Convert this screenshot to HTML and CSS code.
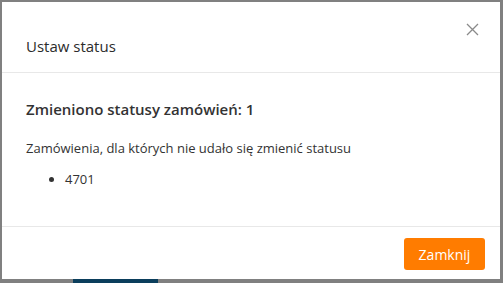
FILE: index.html
```html
<!DOCTYPE html>
<html lang="pl">
<head>
<meta charset="utf-8">
<link rel="stylesheet" href="styles.css">
</head>
<body>
<div class="modal">
  <div class="modal-header">
    <h4 class="modal-title">Ustaw status</h4>
    <button class="close" aria-label="Zamknij">
      <svg width="13" height="13" viewBox="0 0 13 13"><path d="M1 1L12 12M12 1L1 12" stroke="#8a8a8a" stroke-width="1.3" fill="none"/></svg>
    </button>
  </div>
  <div class="modal-body">
    <h3 class="result">Zmieniono statusy zamówień: 1</h3>
    <p class="info">Zamówienia, dla których nie udało się zmienić statusu</p>
    <ul class="orders">
      <li>4701</li>
    </ul>
  </div>
  <div class="modal-footer">
    <button class="btn">Zamknij</button>
  </div>
</div>
<div class="under">
  <div class="under-box"></div>
</div>
</body>
</html>
```
FILE: styles.css
```css
html, body {
  margin: 0;
  padding: 0;
  height: 283px;
  overflow: hidden;
}
body {
  background: #808080;
  font-family: "Open Sans", "Noto Sans", sans-serif;
  color: #333;
  padding-top: 2px;
  box-sizing: border-box;
}
.modal {
  margin-left: 2px;
  width: 498px;
  height: 277px;
  background: #fff;
  display: flex;
  flex-direction: column;
}
.modal-header {
  height: 71px;
  box-sizing: border-box;
  border-bottom: 1px solid #e8e8e8;
  display: flex;
  align-items: flex-start;
  justify-content: space-between;
  padding: 0 24px;
}
.modal-title {
  margin: 34px 0 0;
  font-size: 15px;
  font-weight: 400;
  line-height: 20px;
  color: #2b2b2b;
}
.close {
  margin: 21px -3px 0 0;
  padding: 0;
  border: 0;
  background: none;
  width: 13px;
  height: 13px;
  display: flex;
}
.modal-body {
  height: 154px;
  box-sizing: border-box;
  border-bottom: 1px solid #e8e8e8;
  padding: 26px 24px 0;
}
.result {
  margin: 0;
  font-size: 15px;
  font-weight: 600;
  line-height: 20px;
  color: #333;
}
.info {
  margin: 20px 0 0;
  font-size: 13px;
  line-height: 18px;
}
.orders {
  margin: 13px 0 0;
  padding-left: 39px;
  font-size: 13px;
  line-height: 18px;
}
.modal-footer {
  flex: 1;
  display: flex;
  justify-content: flex-end;
  align-items: flex-start;
  padding: 11px 15px 0;
}
.btn {
  width: 81px;
  height: 32px;
  border: 0;
  border-radius: 3px;
  background: #ff7c00;
  color: #fff;
  font-family: "Open Sans", "Noto Sans", sans-serif;
  font-size: 14px;
  font-weight: 500;
  padding: 0;
}
.under {
  display: flex;
  padding-left: 73px;
}
.under-box {
  width: 85px;
  height: 4px;
  background: #0b3e5c;
}
```
